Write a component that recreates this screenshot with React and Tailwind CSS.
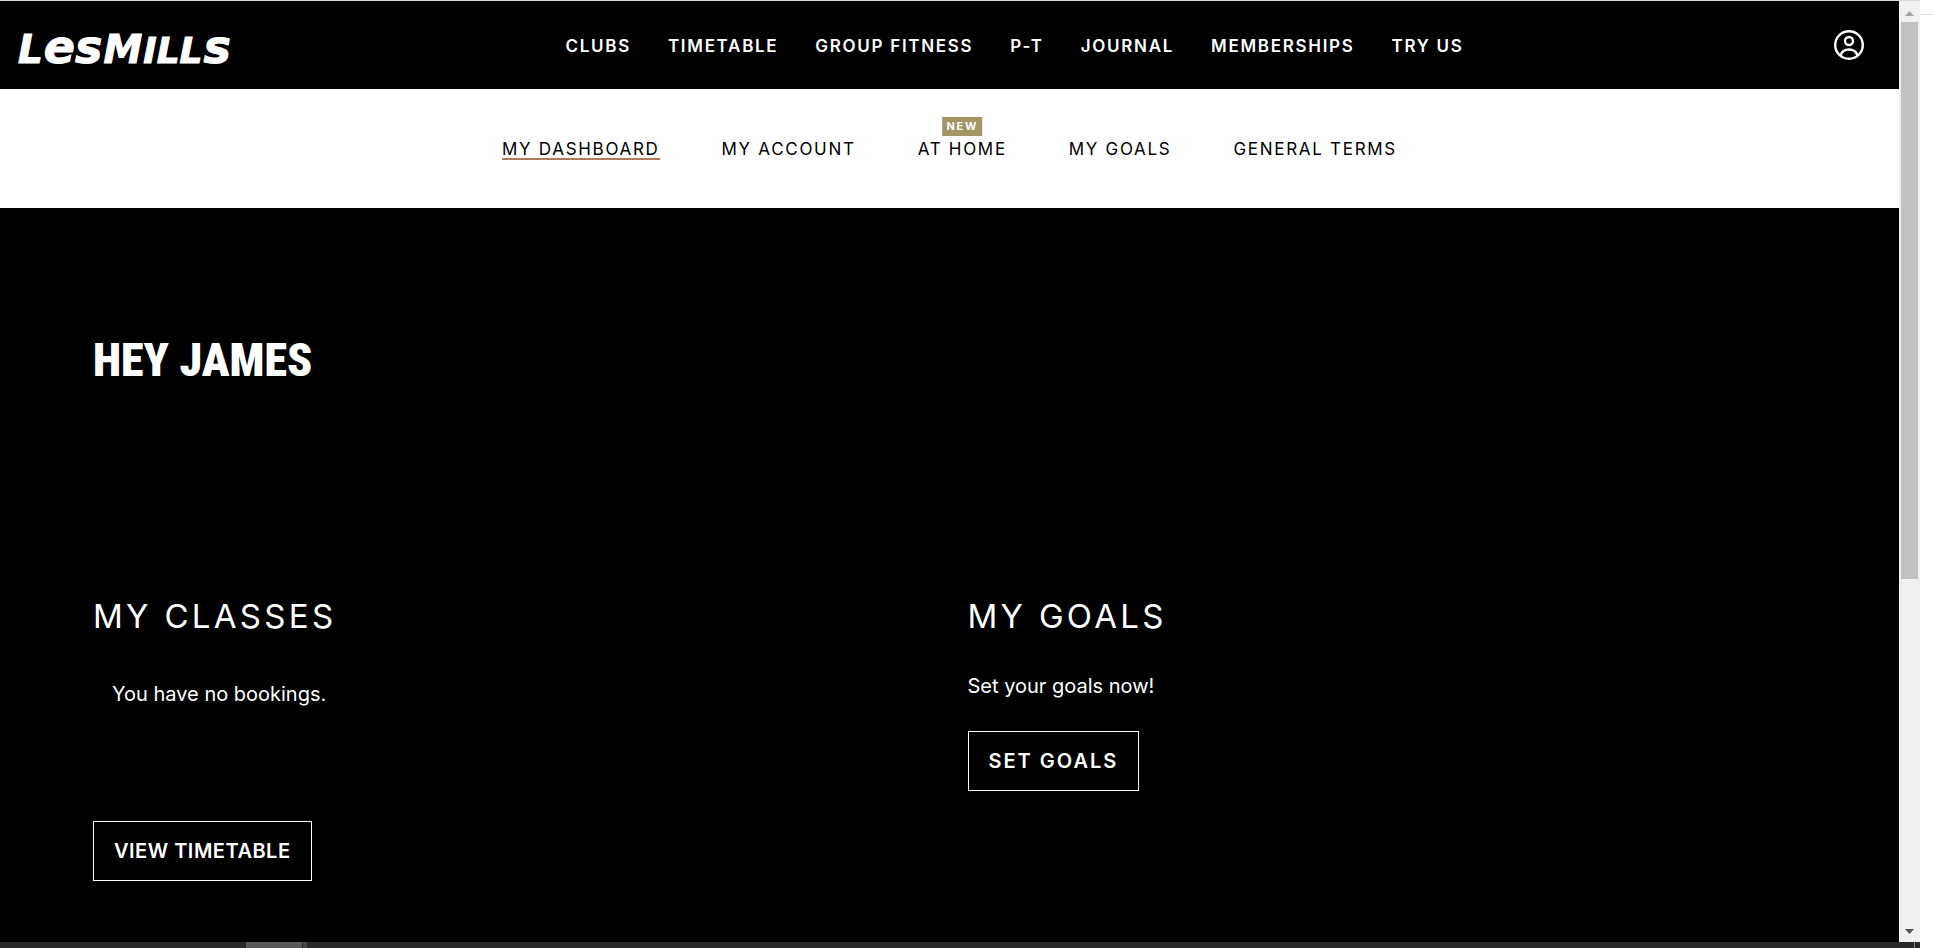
const mainLinks = ['Clubs', 'Timetable', 'Group Fitness', 'P-T', 'Journal', 'Memberships', 'Try Us'];

const accountLinks = [
  { label: 'My Dashboard', active: true },
  { label: 'My Account' },
  { label: 'At Home', isNew: true },
  { label: 'My Goals' },
  { label: 'General Terms' },
];

function Logo() {
  return (
    <a
      href="#home"
      aria-label="Les Mills home"
      className="flex w-[231px] items-baseline gap-px pt-1 pl-[18px] font-['DejaVu_Sans',sans-serif] font-bold italic leading-none [-webkit-text-stroke:1px_white]"
    >
      <span className="text-[39px]">L</span>
      <span className="text-[46px]">es</span>
      <span className="text-[39px]">M</span>
      <span className="text-[36px]">ILL</span>
      <span className="text-[46px]">s</span>
    </a>
  );
}

function AccountIcon() {
  return (
    <svg width="30" height="30" viewBox="0 0 30 30" fill="none" stroke="currentColor" strokeWidth="2.4">
      <circle cx="15" cy="15" r="13.8" />
      <circle cx="15" cy="11" r="4" />
      <path d="M6.4 25.6C7.6 21.8 10.8 19.5 15 19.5s7.4 2.3 8.6 6.1" />
    </svg>
  );
}

function Header() {
  return (
    <header className="flex h-[88px] items-center bg-black text-white">
      <Logo />
      <nav aria-label="Main" className="flex flex-1 justify-center gap-[37px] pt-0.5">
        {mainLinks.map((label) => (
          <a key={label} href="#" className="text-[17px] font-semibold uppercase leading-5 tracking-widest">
            {label}
          </a>
        ))}
      </nav>
      <button type="button" aria-label="My profile" className="pr-[35px] pl-9">
        <AccountIcon />
      </button>
    </header>
  );
}

function AccountNav() {
  return (
    <nav
      aria-label="Account"
      className="flex h-[119px] items-center justify-center gap-[62px] bg-white pt-0.5 text-black"
    >
      {accountLinks.map(({ label, active, isNew }) => (
        <a
          key={label}
          href="#"
          className={`relative border-b-2 text-[17px] uppercase leading-[18px] tracking-widest ${
            active ? 'border-[#ab7d60]' : 'border-transparent'
          }`}
        >
          {isNew && (
            <span className="absolute bottom-full left-1/2 mb-1 -translate-x-1/2 bg-[#a39565] px-1 text-[11px] font-bold leading-[19px] text-white">
              New
            </span>
          )}
          {label}
        </a>
      ))}
    </nav>
  );
}

function Dashboard() {
  return (
    <main className="flex-1 bg-black px-[93px] pt-[120px] text-white">
      <h1 className="font-['Roboto_Condensed','Roboto',sans-serif] text-[46px] font-black uppercase leading-[64px]">
        Hey James
      </h1>
      <div className="mt-[204px] grid grid-cols-2 gap-9">
        <section>
          <h2 className="text-[33px] uppercase leading-10 tracking-widest">My Classes</h2>
          <p className="mt-11 pl-[19px] text-xl leading-7">You have no bookings.</p>
          <button
            type="button"
            className="mt-[113px] h-[60px] border border-white px-5 text-xl font-semibold uppercase tracking-wide"
          >
            View Timetable
          </button>
        </section>
        <section>
          <h2 className="text-[33px] uppercase leading-10 tracking-widest">My Goals</h2>
          <p className="mt-9 text-xl leading-7">Set your goals now!</p>
          <button
            type="button"
            className="mt-[31px] h-[60px] border border-white px-5 text-xl font-semibold uppercase tracking-widest"
          >
            Set Goals
          </button>
        </section>
      </div>
    </main>
  );
}

function Scrollbar() {
  return (
    <div className="flex w-[21px] flex-col items-center bg-[#f0f0f0]">
      <div className="flex h-[21px] items-center pt-1">
        <svg width="9" height="5" viewBox="0 0 9 5" fill="#a3a3a3">
          <path d="M4.5 0 9 5H0z" />
        </svg>
      </div>
      <div className="w-full flex-1 px-0.5">
        <div className="h-[62%] bg-[#c1c1c1]" />
      </div>
      <div className="flex h-[21px] items-center">
        <svg width="9" height="5" viewBox="0 0 9 5" fill="#505050">
          <path d="M0 0h9L4.5 5z" />
        </svg>
      </div>
    </div>
  );
}

function Taskbar() {
  return (
    <div className="flex h-1.5 bg-[#2a2928]">
      <div className="ml-[246px] w-14 bg-[#5a5858]" />
      <div className="ml-px w-1 bg-[#484646]" />
      <div className="mr-[5px] ml-auto w-px bg-[#8a8a8a]" />
    </div>
  );
}

export default function App() {
  return (
    <div className="flex min-h-screen bg-white font-['Inter',sans-serif]">
      <div className="flex flex-1 flex-col">
        <div className="flex flex-1 border-t border-[#dadcdb]">
          <div className="flex flex-1 flex-col">
            <Header />
            <AccountNav />
            <Dashboard />
          </div>
          <Scrollbar />
        </div>
        <Taskbar />
      </div>
      <div className="w-[13px]">
        <div className="h-[15px] border-b border-[#dcdcdc]" />
      </div>
    </div>
  );
}
